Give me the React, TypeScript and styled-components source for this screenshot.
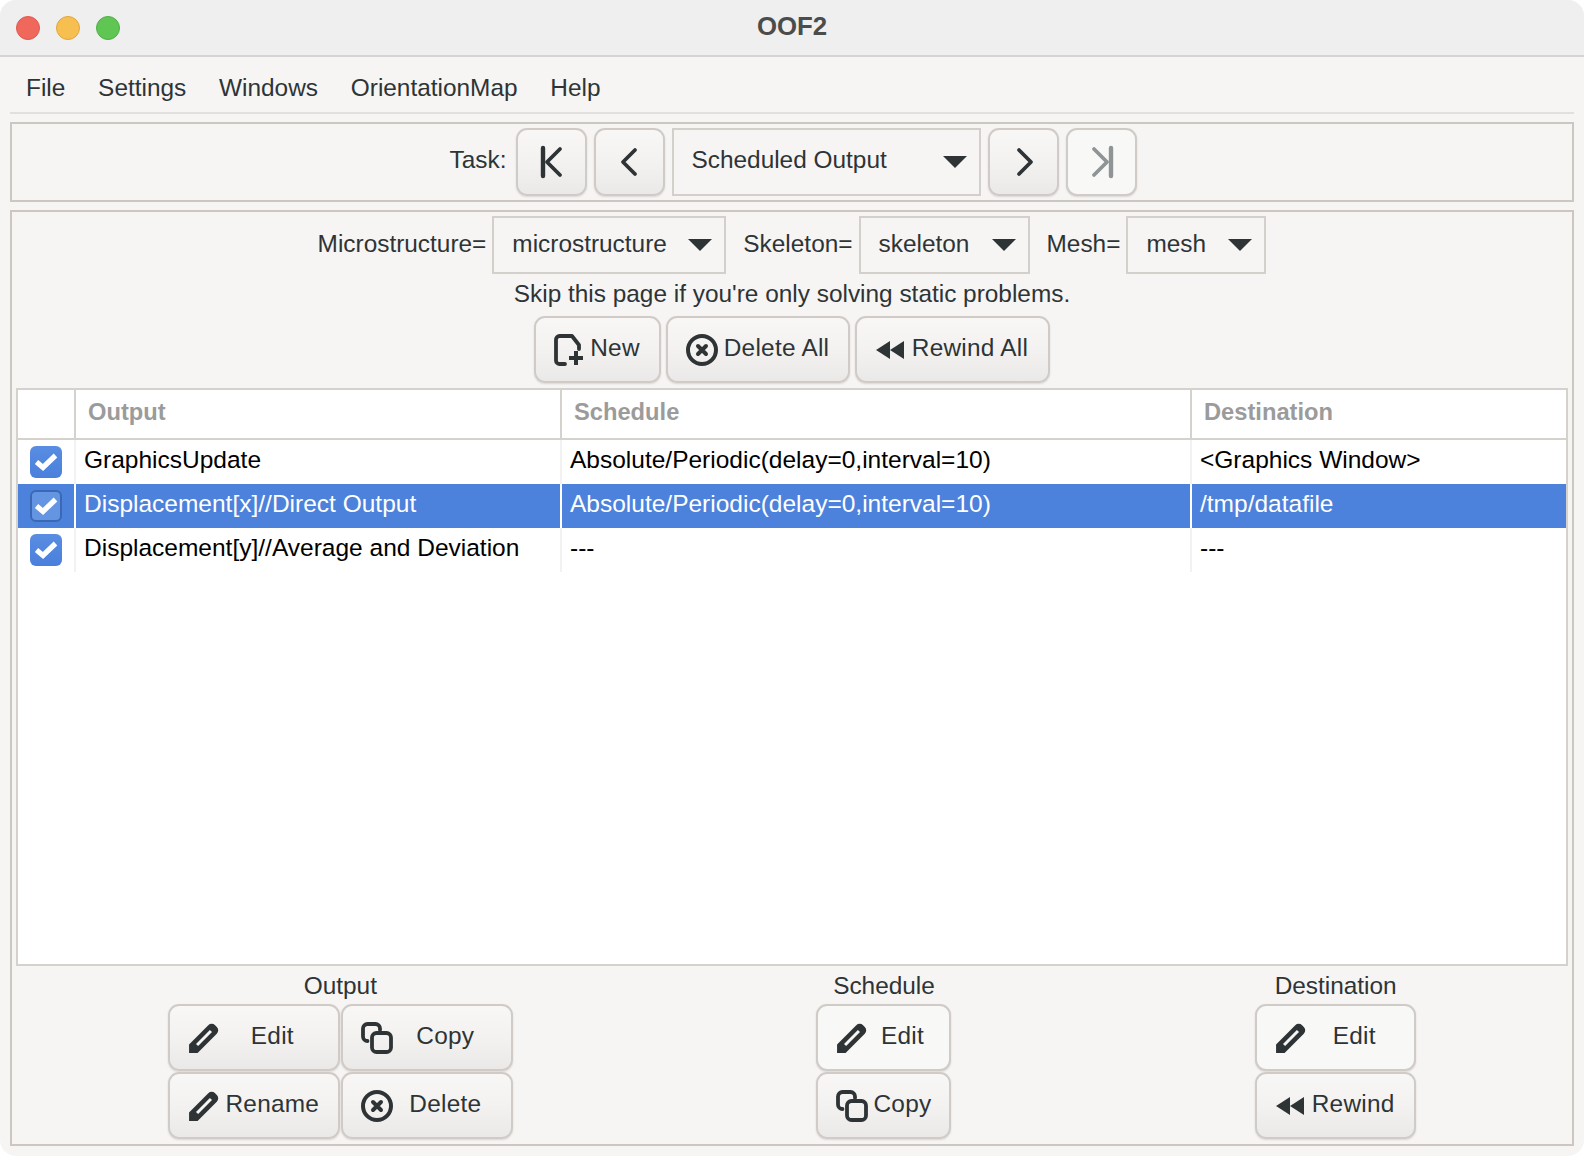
import styled, { createGlobalStyle } from "styled-components";

const GlobalStyle = createGlobalStyle`
  html, body {
    margin: 0;
    padding: 0;
    background: #ffffff;
  }
  * {
    box-sizing: border-box;
  }
`;

const Window = styled.div`
  width: 1584px;
  height: 1156px;
  display: flex;
  flex-direction: column;
  background-color: #f6f5f4;
  border-radius: 16px;
  overflow: hidden;
  color: #2e3436;
  font-family: "Liberation Sans", Arial, sans-serif;
  font-size: 24.4px;
`;

const TitleBar = styled.div`
  height: 57px;
  flex: none;
  display: flex;
  align-items: center;
  justify-content: center;
  position: relative;
  background-color: #efefef;
  border-bottom: 2px solid #d6d4d2;
  font-weight: 700;
  font-size: 25.8px;
  color: #4c4c4c;
  padding-bottom: 3px;
`;

const Lights = styled.div`
  position: absolute;
  left: 16px;
  top: 16px;
  display: flex;
  gap: 16px;
`;

const Light = styled.span<{ $color: string; $edge: string }>`
  width: 24px;
  height: 24px;
  border-radius: 50%;
  background-color: ${(p) => p.$color};
  border: 1px solid ${(p) => p.$edge};
`;

const MenuBar = styled.div`
  height: 57px;
  flex: none;
  margin: 0 10px;
  padding: 6px 16px 0;
  display: flex;
  align-items: center;
  gap: 32.8px;
  border-bottom: 2px solid #e2e0de;
`;

const TaskFrame = styled.div`
  height: 80px;
  flex: none;
  margin: 8px 10px 0;
  padding: 4px 4px 4px 7px;
  display: flex;
  align-items: center;
  justify-content: center;
  gap: 7px;
  border: 2px solid #cdc7c2;
`;

const TaskLabel = styled.span`
  margin: -4px 3px 0 0;
`;

const MainFrame = styled.div`
  flex: 1;
  margin: 8px 10px 10px;
  padding: 4px 4px 5px;
  display: flex;
  flex-direction: column;
  border: 2px solid #cdc7c2;
`;

const SelectorRow = styled.div`
  height: 58px;
  flex: none;
  display: flex;
  justify-content: center;
  align-items: center;
  gap: 6px;
`;

const SelectorGroup = styled.div`
  display: flex;
  align-items: center;
  gap: 6px;
  margin-right: 11px;

  &:last-child {
    margin-right: 0;
  }
`;

const SelectorLabel = styled.span`
  margin-top: -2px;
`;

const Combo = styled.div<{ $width: number; $height: number }>`
  width: ${(p) => p.$width}px;
  height: ${(p) => p.$height}px;
  padding: 0 12px 0 18px;
  display: flex;
  align-items: center;
  justify-content: space-between;
  border: 2px solid #d3cfcb;
`;

const ComboText = styled.span`
  margin-top: -2px;
`;

const TaskComboText = styled(ComboText)`
  margin-top: -5px;
  margin-left: -1px;
`;

const Arrow = styled.span`
  width: 0;
  height: 0;
  border-left: 12px solid transparent;
  border-right: 12px solid transparent;
  border-top: 12px solid #2e3436;
`;

const Hint = styled.div`
  height: 42px;
  flex: none;
  padding-bottom: 2px;
  display: flex;
  align-items: center;
  justify-content: center;
`;

const ActionRow = styled.div`
  display: flex;
  flex: none;
  justify-content: center;
  gap: 5px;
`;

const Button = styled.button<{ $width?: number; $pale?: boolean }>`
  width: ${(p) => (p.$width ? `${p.$width}px` : "auto")};
  height: 67px;
  padding: 0 18px;
  display: flex;
  align-items: center;
  gap: 5px;
  color: inherit;
  font: inherit;
  border: 2px solid #d0cbc6;
  border-radius: 11px;
  background: ${(p) =>
    p.$pale
      ? "#f8f8f7"
      : "linear-gradient(to bottom, #f8f7f6 0%, #f3f2f1 50%, #ebe9e7 100%)"};
  box-shadow: 0 1px 2px rgba(0, 0, 0, 0.12);
`;

const ButtonLabel = styled.span`
  flex: 1;
  text-align: center;
  margin-top: -3px;
  white-space: nowrap;
  letter-spacing: 0.25px;
`;

const NavButton = styled(Button)<{ $off?: boolean }>`
  width: 71px;
  height: 68px;
  padding: 0;
  justify-content: center;
  color: ${(p) => (p.$off ? "#8f9494" : "#2e3436")};
  background: ${(p) =>
    p.$off
      ? "#f8f8f7"
      : "linear-gradient(to bottom, #f8f7f6 0%, #f3f2f1 50%, #ebe9e7 100%)"};
`;

const Table = styled.div`
  flex: 1;
  margin-top: 5px;
  background-color: #ffffff;
  border: 2px solid #d5d1cd;
  color: #000000;
  font-size: 24.5px;
`;

const HeaderRow = styled.div`
  height: 50px;
  display: grid;
  grid-template-columns: 58px 486px 630px 1fr;
  border-bottom: 2px solid #d5d1cd;
`;

const HeaderCell = styled.div`
  padding: 0 0 4px 12px;
  display: flex;
  align-items: center;
  font-weight: 700;
  font-size: 23.7px;
  color: #9b9b9b;
  border-right: 2px solid #d5d1cd;

  &:last-child {
    border-right: none;
  }
`;

const Row = styled.div<{ $selected?: boolean }>`
  height: 44px;
  display: grid;
  grid-template-columns: 58px 486px 630px 1fr;
  background-color: ${(p) => (p.$selected ? "#4c82dc" : "#ffffff")};
  color: ${(p) => (p.$selected ? "#ffffff" : "#000000")};
`;

const Cell = styled.div<{ $selected?: boolean }>`
  padding: 0 0 5px 8px;
  display: flex;
  align-items: center;
  white-space: nowrap;
  border-right: 2px solid ${(p) => (p.$selected ? "#ffffff" : "#f2f2f2")};

  &:last-child {
    border-right: none;
  }
`;

const CheckCell = styled(Cell)`
  padding: 0 0 0 12px;
`;

const Check = styled.span<{ $selected?: boolean }>`
  width: 32px;
  height: 32px;
  display: flex;
  align-items: center;
  justify-content: center;
  border-radius: 6px;
  border: ${(p) => (p.$selected ? "2px solid #3b68b3" : "none")};
  background: ${(p) =>
    p.$selected
      ? "#6495e3"
      : "linear-gradient(to bottom, #5a8de2, #4a80dc)"};
`;

const Footer = styled.div`
  flex: none;
  display: flex;
  justify-content: space-around;
`;

const FooterGroup = styled.div`
  display: flex;
  flex-direction: column;
  align-items: center;
`;

const FooterTitle = styled.div`
  height: 38px;
  padding-top: 1px;
  display: flex;
  align-items: center;
`;

const ButtonGrid = styled.div<{ $cols: number }>`
  display: grid;
  grid-template-columns: repeat(${(p) => p.$cols}, auto);
  gap: 1px;
`;

const Chevron = ({ points }: { points: string }) => (
  <svg width="32" height="32" viewBox="0 0 32 32" fill="none" stroke="currentColor" strokeWidth="3.8" strokeLinecap="round" strokeLinejoin="round">
    <polyline points={points} />
  </svg>
);

const FirstIcon = () => (
  <svg width="32" height="34" viewBox="0 0 32 34" fill="none" stroke="currentColor" strokeWidth="4.4" strokeLinecap="round" strokeLinejoin="round">
    <line x1="7" y1="3" x2="7" y2="31" />
    <polyline points="24,4 11,17 24,30" strokeWidth="3.8" />
  </svg>
);

const LastIcon = () => (
  <svg width="32" height="34" viewBox="0 0 32 34" fill="none" stroke="currentColor" strokeWidth="4.4" strokeLinecap="round" strokeLinejoin="round">
    <line x1="25" y1="3" x2="25" y2="31" />
    <polyline points="8,4 21,17 8,30" strokeWidth="3.8" />
  </svg>
);

const PencilIcon = () => (
  <svg width="32" height="32" viewBox="0 0 30 30">
    <path d="M1 29 V21 L19 3 a4.5 4.5 0 0 1 6.4 0 l1.6 1.6 a4.5 4.5 0 0 1 0 6.4 L9 29 Z" fill="#2e3436" />
    <line x1="8.5" y1="21.5" x2="21.5" y2="8.5" stroke="#f6f5f4" strokeWidth="2.8" />
  </svg>
);

const CopyIcon = () => (
  <svg width="32" height="32" viewBox="0 0 32 32" fill="none" stroke="#2e3436" strokeWidth="3.8" strokeLinecap="round">
    <path d="M19 8 V6.5 a4.5 4.5 0 0 0 -4.5 -4.5 H6.5 a4.5 4.5 0 0 0 -4.5 4.5 V14.5 a4.5 4.5 0 0 0 4.5 4.5" />
    <rect x="11" y="11" width="19" height="19" rx="4.5" />
  </svg>
);

const DeleteIcon = () => (
  <svg width="32" height="32" viewBox="0 0 32 32" fill="none" stroke="#2e3436">
    <circle cx="16" cy="16" r="14" strokeWidth="4" />
    <path d="M12 12 L20 20 M20 12 L12 20" strokeWidth="4" strokeLinecap="round" />
  </svg>
);

const NewIcon = () => (
  <svg width="30" height="32" viewBox="0 0 30 32" fill="none" stroke="#2e3436" strokeWidth="3.8" strokeLinecap="round" strokeLinejoin="round">
    <path d="M11 30 H5.5 a3.5 3.5 0 0 1 -3.5 -3.5 V5.5 A3.5 3.5 0 0 1 5.5 2 H18 L25 11 V15" />
    <path d="M22 17 V31 M15 24 H29" strokeLinecap="butt" strokeWidth="4" />
  </svg>
);

const RewindIcon = () => (
  <svg width="30" height="20" viewBox="0 0 30 20" fill="#2e3436">
    <path d="M1 10 L15 1 V19 Z" />
    <path d="M15 10 L29 1 V19 Z" />
  </svg>
);

const CheckMark = () => (
  <svg width="24" height="20" viewBox="0 0 24 20" fill="none" stroke="#ffffff" strokeWidth="5.2">
    <polyline points="2.5,10 9,15.5 21.5,3.5" />
  </svg>
);

const rows = [
  { output: "GraphicsUpdate", schedule: "Absolute/Periodic(delay=0,interval=10)", destination: "<Graphics Window>" },
  { output: "Displacement[x]//Direct Output", schedule: "Absolute/Periodic(delay=0,interval=10)", destination: "/tmp/datafile", selected: true },
  { output: "Displacement[y]//Average and Deviation", schedule: "---", destination: "---" },
];

function App() {
  return (
    <Window>
      <GlobalStyle />
      <TitleBar>
        <Lights>
          <Light $color="#f0675c" $edge="#dc5a50" />
          <Light $color="#f6bf4f" $edge="#dfa640" />
          <Light $color="#5fc653" $edge="#52ad47" />
        </Lights>
        OOF2
      </TitleBar>
      <MenuBar>
        {["File", "Settings", "Windows", "OrientationMap", "Help"].map((m) => (
          <span key={m}>{m}</span>
        ))}
      </MenuBar>
      <TaskFrame>
        <TaskLabel>Task:</TaskLabel>
        <NavButton><FirstIcon /></NavButton>
        <NavButton><Chevron points="21,4 9,16 21,28" /></NavButton>
        <Combo $width={309} $height={68}>
          <TaskComboText>Scheduled Output</TaskComboText>
          <Arrow />
        </Combo>
        <NavButton><Chevron points="11,4 23,16 11,28" /></NavButton>
        <NavButton $off><LastIcon /></NavButton>
      </TaskFrame>
      <MainFrame>
        <SelectorRow>
          <SelectorGroup>
            <SelectorLabel>Microstructure=</SelectorLabel>
            <Combo $width={234} $height={58}>
              <ComboText>microstructure</ComboText>
              <Arrow />
            </Combo>
          </SelectorGroup>
          <SelectorGroup>
            <SelectorLabel>Skeleton=</SelectorLabel>
            <Combo $width={171} $height={58}>
              <ComboText>skeleton</ComboText>
              <Arrow />
            </Combo>
          </SelectorGroup>
          <SelectorGroup>
            <SelectorLabel>Mesh=</SelectorLabel>
            <Combo $width={140} $height={58}>
              <ComboText>mesh</ComboText>
              <Arrow />
            </Combo>
          </SelectorGroup>
        </SelectorRow>
        <Hint>Skip this page if you're only solving static problems.</Hint>
        <ActionRow>
          <Button $width={127}><NewIcon /><ButtonLabel>New</ButtonLabel></Button>
          <Button $width={184}><DeleteIcon /><ButtonLabel>Delete All</ButtonLabel></Button>
          <Button $width={195}><RewindIcon /><ButtonLabel>Rewind All</ButtonLabel></Button>
        </ActionRow>
        <Table>
          <HeaderRow>
            <HeaderCell />
            <HeaderCell>Output</HeaderCell>
            <HeaderCell>Schedule</HeaderCell>
            <HeaderCell>Destination</HeaderCell>
          </HeaderRow>
          {rows.map((r) => (
            <Row key={r.output} $selected={r.selected}>
              <CheckCell $selected={r.selected}>
                <Check $selected={r.selected}><CheckMark /></Check>
              </CheckCell>
              <Cell $selected={r.selected}>{r.output}</Cell>
              <Cell $selected={r.selected}>{r.schedule}</Cell>
              <Cell $selected={r.selected}>{r.destination}</Cell>
            </Row>
          ))}
        </Table>
        <Footer>
          <FooterGroup>
            <FooterTitle>Output</FooterTitle>
            <ButtonGrid $cols={2}>
              <Button $width={172}><PencilIcon /><ButtonLabel>Edit</ButtonLabel></Button>
              <Button $width={172}><CopyIcon /><ButtonLabel>Copy</ButtonLabel></Button>
              <Button $width={172}><PencilIcon /><ButtonLabel>Rename</ButtonLabel></Button>
              <Button $width={172}><DeleteIcon /><ButtonLabel>Delete</ButtonLabel></Button>
            </ButtonGrid>
          </FooterGroup>
          <FooterGroup>
            <FooterTitle>Schedule</FooterTitle>
            <ButtonGrid $cols={1}>
              <Button $width={135} $pale><PencilIcon /><ButtonLabel>Edit</ButtonLabel></Button>
              <Button $width={135}><CopyIcon /><ButtonLabel>Copy</ButtonLabel></Button>
            </ButtonGrid>
          </FooterGroup>
          <FooterGroup>
            <FooterTitle>Destination</FooterTitle>
            <ButtonGrid $cols={1}>
              <Button $width={161} $pale><PencilIcon /><ButtonLabel>Edit</ButtonLabel></Button>
              <Button $width={161}><RewindIcon /><ButtonLabel>Rewind</ButtonLabel></Button>
            </ButtonGrid>
          </FooterGroup>
        </Footer>
      </MainFrame>
    </Window>
  );
}

export default App;
